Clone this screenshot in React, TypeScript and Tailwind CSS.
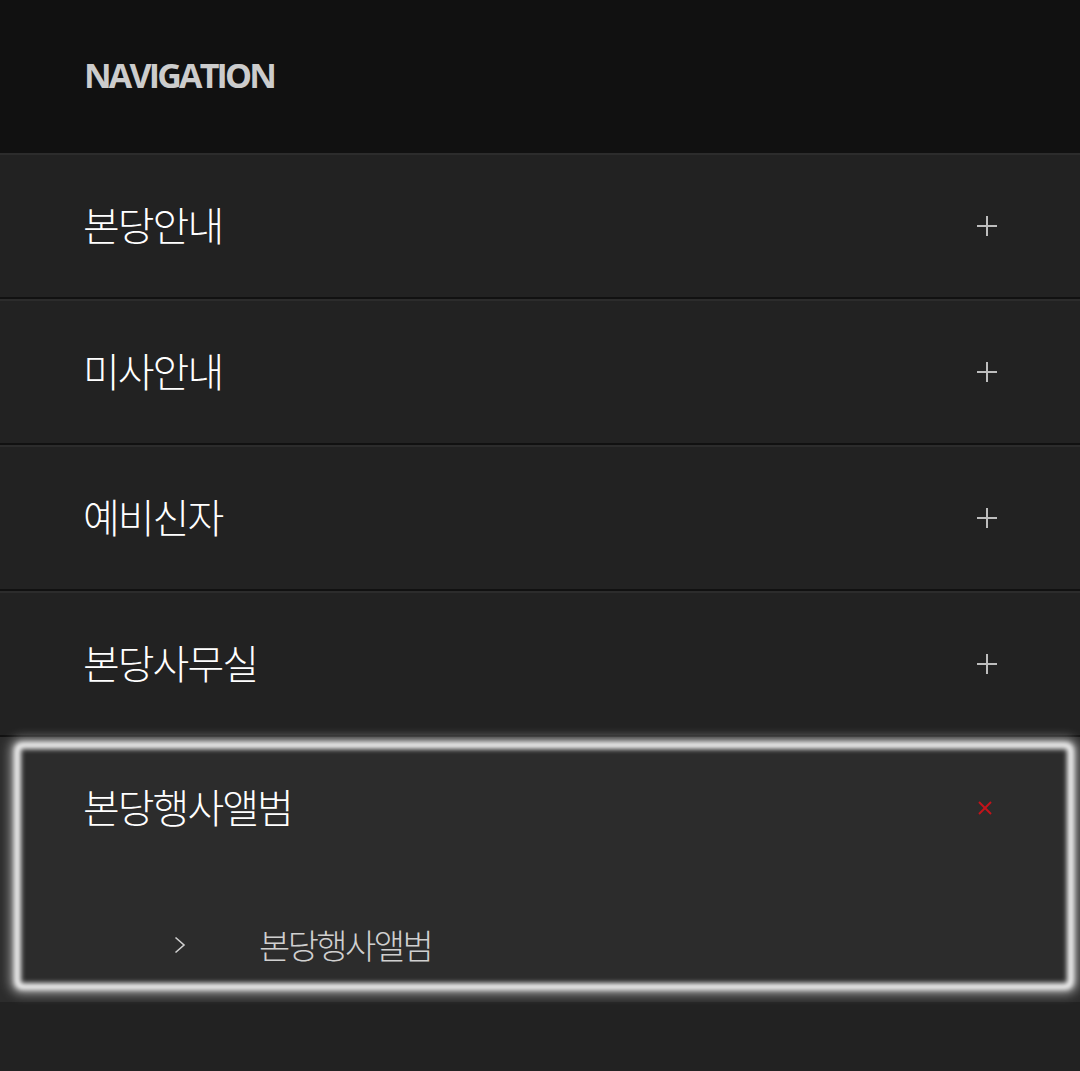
import React from "react";

const items = ["본당안내", "미사안내", "예비신자", "본당사무실"];

function PlusIcon() {
  return (
    <svg width="20" height="20" viewBox="0 0 20 20" className="shrink-0">
      <line x1="10" y1="0" x2="10" y2="20" stroke="#bdbdbd" strokeWidth="2" />
      <line x1="0" y1="10" x2="20" y2="10" stroke="#bdbdbd" strokeWidth="2" />
    </svg>
  );
}

function CloseIcon() {
  return (
    <svg width="14" height="14" viewBox="0 0 14 14" className="shrink-0">
      <line x1="1" y1="1" x2="13" y2="13" stroke="#c4131a" strokeWidth="2" />
      <line x1="13" y1="1" x2="1" y2="13" stroke="#c4131a" strokeWidth="2" />
    </svg>
  );
}

function Chevron() {
  return (
    <svg width="12" height="18" viewBox="0 0 12 18" className="shrink-0">
      <polyline points="1.5,1.5 10,9 1.5,16.5" fill="none" stroke="#d0d0d0" strokeWidth="1.6" />
    </svg>
  );
}

export default function App() {
  const kr = { fontFamily: '"Noto Sans CJK KR", "Noto Sans", sans-serif' };

  return (
    <div className="min-h-[1071px] w-full bg-[#222222]">
      {/* Header */}
      <div className="flex h-[153px] items-center bg-[#111111] pb-[4px] pl-[84px]">
        <h2
          className="text-[34px] font-bold leading-none tracking-[-2.8px] text-[#cccccc]"
          style={{ fontFamily: '"Open Sans", sans-serif' }}
        >
          NAVIGATION
        </h2>
      </div>

      <ul>
        {items.map((label) => (
          <li
            key={label}
            className="flex h-[146px] items-center justify-between border-t-2 border-b-2 border-t-[#2c2c2c] border-b-[#111111] bg-[#222222] pl-[83px] pr-[83px]"
          >
            <span
              className="pb-[5px] text-[40px] font-light leading-none tracking-[-2px] text-white"
              style={kr}
            >
              {label}
            </span>
            <PlusIcon />
          </li>
        ))}

        {/* Active item */}
        <li className="relative h-[265px] bg-[#2c2c2c]">
          <div className="flex h-[142px] items-center justify-between pl-[83px] pr-[88px]">
            <span
              className="pb-[5px] text-[40px] font-light leading-none tracking-[-2px] text-white"
              style={kr}
            >
              본당행사앨범
            </span>
            <CloseIcon />
          </div>
          <div className="mt-[49px] flex items-center pl-[174px]">
            <Chevron />
            <span
              className="ml-[73px] text-[34px] font-light leading-none tracking-[-2.6px] text-[#d0d0d0]"
              style={kr}
            >
              본당행사앨범
            </span>
          </div>
          <div className="pointer-events-none absolute left-[14px] right-[6px] top-[5px] bottom-[12px] rounded-[8px] border-[7px] border-[#f2f2f2] shadow-[0_0_10px_4px_rgba(255,255,255,0.5)] blur-[2.5px]" />
        </li>
      </ul>
    </div>
  );
}
